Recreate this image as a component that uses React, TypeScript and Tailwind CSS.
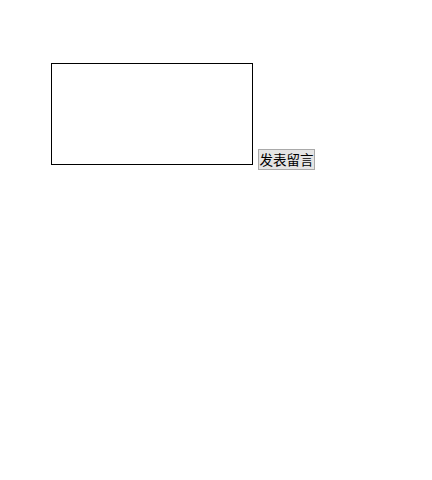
export default function App() {
  return (
    <div className="min-h-[480px] bg-white pl-[51px] pt-[63px]">
      <div className="flex items-end">
        <textarea className="h-[102px] w-[202px] resize-none border border-black bg-white p-[2px] text-sm outline-none" />
        <button
          className="mb-[-5px] ml-[5px] h-[21px] w-[57px] border border-[#a9a9a9] bg-[#e5e5e5] px-0 text-[13.5px] leading-[19px] text-black"
          style={{ fontFamily: '"Noto Sans CJK SC", sans-serif' }}
        >
          发表留言
        </button>
      </div>
    </div>
  );
}
